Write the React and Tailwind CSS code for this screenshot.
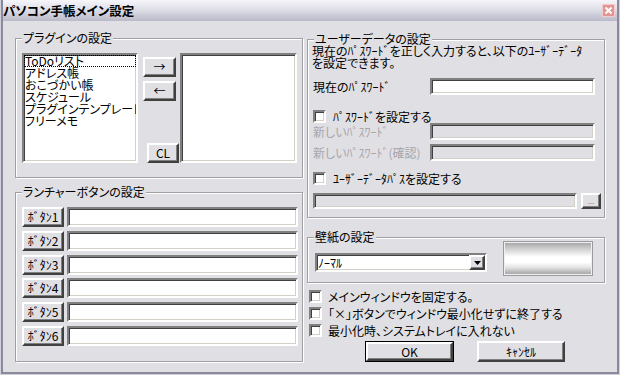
import React from "react";

const sunken =
  "border-2 border-t-[#808080] border-l-[#808080] border-b-white border-r-white shadow-[inset_1px_1px_0_#404040,inset_-1px_-1px_0_#d4d0c8]";
const raised =
  "border-2 border-t-white border-l-white border-b-[#404040] border-r-[#404040] shadow-[inset_-1px_-1px_0_#808080] bg-[#e0dfe3] flex items-center justify-center";

function GroupBox({ title, className, children }) {
  return (
    <fieldset
      className={
        "border border-[#a0a0a4] shadow-[inset_1px_1px_0_#fff,1px_1px_0_#fff] m-0 p-0 min-w-0 " +
        className
      }
    >
      <legend className="ml-[6px] px-[1px] leading-[12px] bg-[#e0dfe3]">{title}</legend>
      {children}
    </fieldset>
  );
}

function Check() {
  return <span className={sunken + " block bg-white w-[13px] h-[13px] shrink-0"} />;
}

const plugins = [
  "ToDoリスト",
  "アドレス帳",
  "おこづかい帳",
  "スケジュール",
  "プラグインテンプレート",
  "フリーメモ",
];

export default function App() {
  return (
    <div className="w-[620px] h-[375px] border-x border-b border-[#d0d0da] bg-[#e0dfe3] text-black text-[12px] leading-[12px] font-['Noto_Sans_CJK_JP','Noto_Sans_CJK_SC',sans-serif] [font-feature-settings:'palt']">
      <div className="w-full h-full border-x-2 border-b-2 border-[#8a8a9c] flex flex-col">
        {/* Title bar */}
        <div className="h-[21px] shrink-0 flex items-center justify-between pr-[2px] bg-[linear-gradient(to_bottom,#f6f6fa,#dcdce6_50%,#b9b9c9)]">
          <span className="font-bold text-[12.5px] leading-[13px]">パソコン手帳メイン設定</span>
          <span className="w-[13px] h-[13px] bg-[#e39595] border border-[#f3cccc] flex items-center justify-center">
            <svg width="9" height="9" viewBox="0 0 9 9">
              <path d="M1.5 1.5 L7.5 7.5 M7.5 1.5 L1.5 7.5" stroke="#fff" strokeWidth="2" />
            </svg>
          </span>
        </div>

        {/* Body */}
        <div className="flex-1 flex gap-[4px] pl-[12px] pt-[11px]">
          {/* Left column */}
          <div className="w-[288px] flex flex-col gap-[8px]">
            <GroupBox title="プラグインの設定" className="h-[146px]">
              <div className="flex pl-[6px] pt-[9px]">
                <div className={sunken + " bg-white w-[116px] h-[110px] overflow-hidden"}>
                  {plugins.map((p, i) => (
                    <div
                      key={p}
                      className={
                        i === 0
                          ? "h-[12px] whitespace-nowrap outline-1 outline-dotted outline-black -outline-offset-1 pl-[1px]"
                          : "h-[12px] whitespace-nowrap pl-[1px]"
                      }
                    >
                      {p}
                    </div>
                  ))}
                </div>
                <div className="w-[42px] h-[110px] flex flex-col">
                  <div className={raised + " ml-[5px] mt-[4px] w-[33px] h-[20px]"}>→</div>
                  <div className={raised + " ml-[5px] mt-[4px] w-[33px] h-[20px]"}>←</div>
                  <div className={raised + " ml-[9px] mt-auto w-[32px] h-[20px]"}>CL</div>
                </div>
                <div className={sunken + " bg-white w-[117px] h-[110px]"} />
              </div>
            </GroupBox>

            <GroupBox title="ランチャーボタンの設定" className="h-[176px]">
              <div className="flex flex-col gap-[3.8px] pl-[6px] pt-[9px]">
                {[1, 2, 3, 4, 5, 6].map((n) => (
                  <div key={n} className="flex gap-[3px]">
                    <div className={raised + " w-[42px] h-[20px]"}>ﾎﾞﾀﾝ{n}</div>
                    <div className={sunken + " bg-white w-[231px] h-[20px]"} />
                  </div>
                ))}
              </div>
            </GroupBox>
          </div>

          {/* Right column */}
          <div className="w-[298px] flex flex-col mt-[1px]">
            <GroupBox title="ユーザーデータの設定" className="h-[185px]">
              <div className="pl-[4px]">
                <p className="whitespace-nowrap leading-[12px]">
                  現在のﾊﾟｽﾜｰﾄﾞを正しく入力すると、以下のﾕｰｻﾞｰﾃﾞｰﾀ
                  <br />
                  を設定できます。
                </p>
                <div className="flex items-center mt-[9px]">
                  <span className="w-[118px] pl-[1px] whitespace-nowrap">現在のﾊﾟｽﾜｰﾄﾞ</span>
                  <div className={sunken + " bg-white w-[165px] h-[17px]"} />
                </div>
                <div className="flex items-center gap-[7px] mt-[15px] pl-[1px] h-[13px]">
                  <Check />
                  <span className="whitespace-nowrap">ﾊﾟｽﾜｰﾄﾞを設定する</span>
                </div>
                <div className="flex items-center">
                  <span className="w-[118px] pl-[1px] whitespace-nowrap text-[#a7a6ab]">新しいﾊﾟｽﾜｰﾄﾞ</span>
                  <div className={sunken + " w-[165px] h-[17px]"} />
                </div>
                <div className="flex items-center mt-[4px]">
                  <span className="w-[118px] pl-[1px] whitespace-nowrap text-[#a7a6ab]">新しいﾊﾟｽﾜｰﾄﾞ(確認)</span>
                  <div className={sunken + " w-[165px] h-[17px]"} />
                </div>
                <div className="flex items-center gap-[7px] mt-[11px] pl-[1px] h-[13px]">
                  <Check />
                  <span className="whitespace-nowrap">ﾕｰｻﾞｰﾃﾞｰﾀﾊﾟｽを設定する</span>
                </div>
                <div className="flex gap-[4px] mt-[8px] pl-[1px]">
                  <div className={sunken + " w-[264px] h-[16px]"} />
                  <div className={raised + " w-[20px] h-[16px] text-[8px] leading-[8px] text-[#808080] items-end pb-[2px]"}>...</div>
                </div>
              </div>
            </GroupBox>

            <GroupBox title="壁紙の設定" className="h-[52px] mt-[13px]">
              <div className="flex items-start">
                <div className={sunken + " bg-white ml-[7px] mt-[10px] w-[172px] h-[19px] flex items-center justify-between"}>
                  <span className="pl-[1px]">ﾉｰﾏﾙ</span>
                  <div className={raised + " w-[16px] h-[15px]"}>
                    <svg width="7" height="4" viewBox="0 0 7 4">
                      <path d="M0 0 H7 L3.5 4 Z" fill="#000" />
                    </svg>
                  </div>
                </div>
                <div className="ml-[16px] -mt-[2px] w-[90px] h-[35px] border border-[#9a9a9e] p-px bg-[#f0f0f0]">
                  <div className="w-full h-full bg-[linear-gradient(to_bottom,#a8a8a8_0%,#c8c8c8_15%,#e4e4e4_30%,#ffffff_45%,#ffffff_62%,#e6e6e6_78%,#bdbdbd_92%,#a8a8a8_100%)]" />
                </div>
              </div>
            </GroupBox>

            <div className="mt-[5px] pl-[2px] flex flex-col">
              {[
                "メインウィンドウを固定する。",
                "「×」ボタンでウィンドウ最小化せずに終了する",
                "最小化時、システムトレイに入れない",
              ].map((t) => (
                <div key={t} className="h-[17px] flex items-center gap-[6px]">
                  <Check />
                  <span className="whitespace-nowrap">{t}</span>
                </div>
              ))}
            </div>

            <div className="flex gap-[23px] pl-[58px] mt-[2px]">
              <div className="w-[89px] h-[21px] border border-black">
                <div className={raised + " w-full h-full"}>OK</div>
              </div>
              <div className={raised + " w-[88px] h-[21px]"}>ｷｬﾝｾﾙ</div>
            </div>
          </div>
        </div>
      </div>
    </div>
  );
}
